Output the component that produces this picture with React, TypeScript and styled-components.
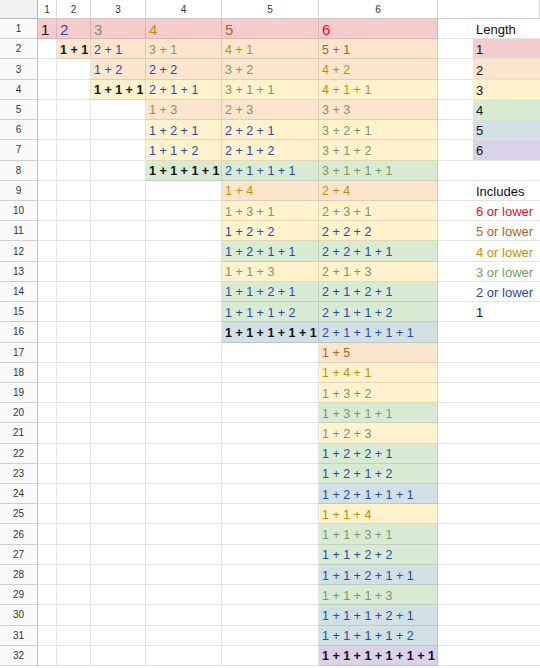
import React from "react";
import styled, { createGlobalStyle } from "styled-components";

const GlobalStyle = createGlobalStyle`
  html, body {
    margin: 0;
    padding: 0;
    background: #ffffff;
    overflow: hidden;
  }
`;

// background by number of parts, text colour by largest part
const lengthColors: Record<number, string> = {
  1: "#f4cccc",
  2: "#fce5cd",
  3: "#fff2cc",
  4: "#d9ead3",
  5: "#d0e0e3",
  6: "#d9d2e9",
};

const partColors: Record<number, string> = {
  1: "#111111",
  2: "#2a4aa8",
  3: "#7b9868",
  4: "#bf9000",
  5: "#ad6418",
  6: "#e0102a",
};

const ROWS = 32;
const COLS = 6;

const compositions = (n: number): number[][] => {
  const res: number[][] = [[n]];
  for (let k = n - 1; k >= 1; k--) {
    compositions(n - k).forEach((c) => res.push([k, ...c]));
  }
  return res;
};

const Sheet = styled.div`
  display: grid;
  grid-template-columns: 38px 19px 34px 55px 76px 97px 119px 1fr;
  grid-template-rows: 19px repeat(${ROWS}, 20.22px);
  width: 540px;
  font-family: "Liberation Sans", Arial, sans-serif;
`;

const Corner = styled.div`
  background: #f1f1f1;
  border-right: 1px solid #b8b8b8;
  border-bottom: 1px solid #b8b8b8;
  box-sizing: border-box;
`;

const ColHeader = styled.div`
  display: flex;
  align-items: center;
  justify-content: center;
  background: #ffffff;
  border-right: 1px solid #d6d6d6;
  border-bottom: 1px solid #c8c8c8;
  box-sizing: border-box;
  font-size: 10px;
  color: #333333;
`;

const RowHeader = styled.div`
  display: flex;
  align-items: center;
  justify-content: center;
  background: #fafafa;
  border-right: 1px solid #bdbdbd;
  border-bottom: 1px solid #cfcfcf;
  box-sizing: border-box;
  font-size: 10px;
  color: #333333;
`;

const Cell = styled.div<{ $bg?: string; $fg?: string; $big?: boolean; $bold?: boolean }>`
  display: flex;
  align-items: center;
  padding: 2px 0 0 3px;
  background: ${(p) => p.$bg || "#ffffff"};
  color: ${(p) => p.$fg || "#111111"};
  border-right: 1px solid rgba(0, 0, 0, 0.11);
  border-bottom: 1px solid rgba(0, 0, 0, 0.11);
  box-sizing: border-box;
  font-size: ${(p) => (p.$big ? "15px" : "12.5px")};
  font-weight: ${(p) => (p.$bold ? 700 : 400)};
  white-space: pre;
  overflow: hidden;
`;

const LegendCell = styled.div`
  display: flex;
  padding-left: 35px;
  border-bottom: 1px solid rgba(0, 0, 0, 0.11);
  box-sizing: border-box;
  overflow: hidden;
`;

const Swatch = styled.div<{ $bg?: string; $fg?: string }>`
  flex: 1;
  display: flex;
  align-items: center;
  padding: 2px 0 0 3px;
  background: ${(p) => p.$bg || "transparent"};
  color: ${(p) => p.$fg || "#111111"};
  font-size: 13px;
  white-space: pre;
`;

const legendFor = (row: number) => {
  if (row === 1) return { text: "Length" };
  if (row >= 2 && row <= 7) return { text: String(row - 1), bg: lengthColors[row - 1] };
  if (row === 9) return { text: "Includes" };
  if (row >= 10 && row <= 14) {
    const n = 16 - row;
    return { text: `${n} or lower`, fg: partColors[n] };
  }
  if (row === 15) return { text: "1", fg: partColors[1] };
  return { text: "" };
};

const App = () => {
  const columns = Array.from({ length: COLS }, (_, i) => compositions(i + 1));

  return (
    <>
      <GlobalStyle />
      <Sheet>
        <Corner />
        {columns.map((_, i) => (
          <ColHeader key={i}>{i + 1}</ColHeader>
        ))}
        <ColHeader />

        {Array.from({ length: ROWS }, (_, r) => {
          const legend = legendFor(r + 1);
          return (
            <React.Fragment key={r}>
              <RowHeader>{r + 1}</RowHeader>
              {columns.map((list, c) => {
                const parts = list[r];
                if (!parts) return <Cell key={c} />;
                const top = Math.max(...parts);
                return (
                  <Cell
                    key={c}
                    $bg={lengthColors[parts.length]}
                    $fg={partColors[top]}
                    $big={r === 0}
                    $bold={top === 1 && r > 0}
                  >
                    {parts.join(" + ")}
                  </Cell>
                );
              })}
              <LegendCell>
                <Swatch $bg={legend.bg} $fg={legend.fg}>
                  {legend.text}
                </Swatch>
              </LegendCell>
            </React.Fragment>
          );
        })}
      </Sheet>
    </>
  );
};

export default App;
